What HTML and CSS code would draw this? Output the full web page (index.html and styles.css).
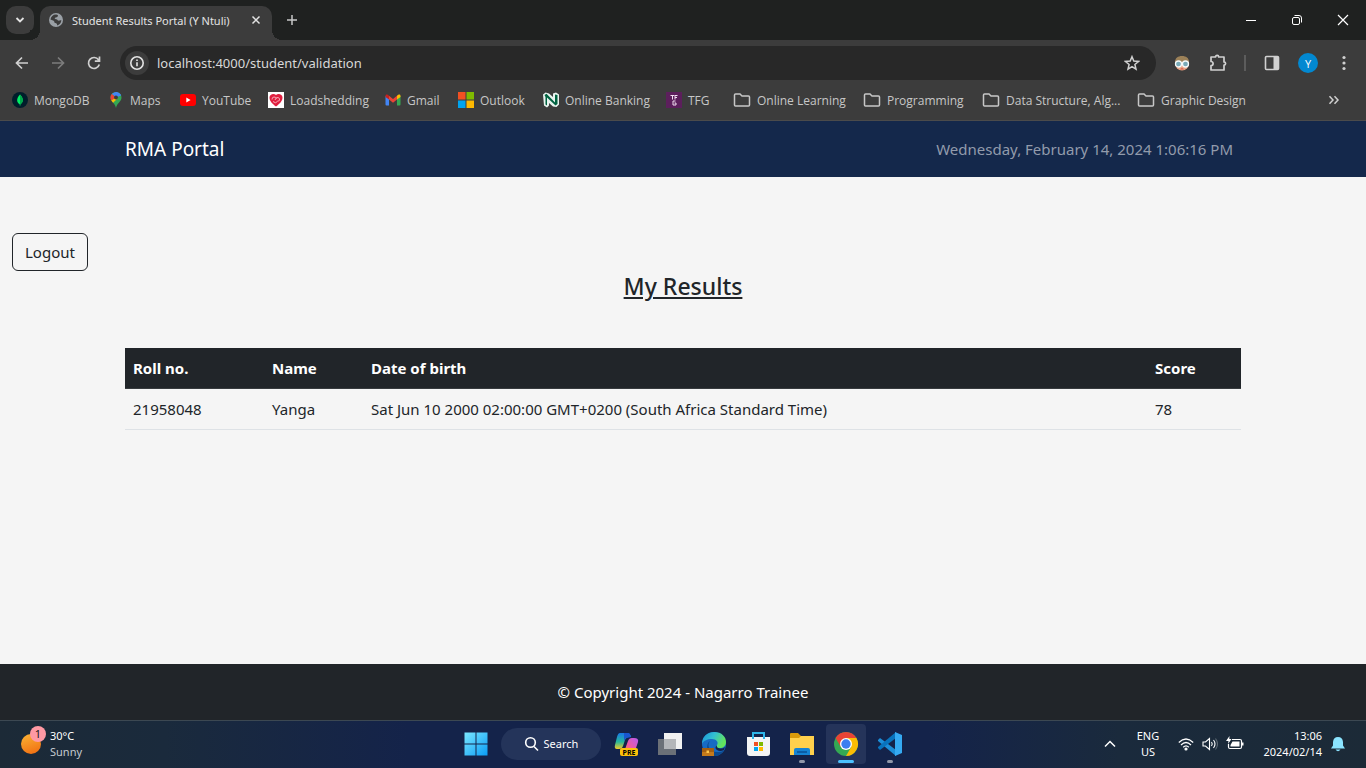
FILE: index.html
```html
<!DOCTYPE html>
<html lang="en">
<head>
<meta charset="utf-8">
<meta name="viewport" content="width=device-width, initial-scale=1">
<title>Student Results Portal (Y Ntuli)</title>
<link rel="stylesheet" href="styles.css">
</head>
<body>
<div class="screen">
  <div class="browser">
    <div class="tab-strip">
      <button class="tab-search" aria-label="Search tabs"><svg width="28" height="28" viewBox="0 0 28 28"><path d="M10.500 12l3.500 3.500 3.500-3.500" fill="none" stroke="#e3e3e3" stroke-width="1.800"/></svg></button>
      <div class="tab">
        <svg width="16" height="16" viewBox="0 0 16 16"><circle cx="8" cy="8" r="7" fill="#9aa0a6"/><path d="M8 2.500c2 0 2.500 1 1.500 2.200-1 1-2.500.3-2.800 1.500-.2 1 2.500.8 3 2 .5 1 1.500 0 3.700 0-.3 3-2 4.600-4.400 5.200.4-1.600-.6-2-1.600-2.300C6 10.700 7 9.200 5 8.400L2.500 7.500C2.900 4.500 5 2.500 8 2.500z" fill="#3c3c3c"/></svg>
        <span class="tab-title">Student Results Portal (Y Ntuli)</span>
        <button class="tab-close" aria-label="Close tab"><svg width="16" height="16" viewBox="0 0 16 16"><path d="M4.500 4.500l7 7M11.500 4.500l-7 7" stroke="#e3e3e3" stroke-width="1.500"/></svg></button>
      </div>
      <button class="new-tab" aria-label="New tab"><svg width="16" height="16" viewBox="0 0 16 16"><path d="M8 3v10M3 8h10" stroke="#c7c7c7" stroke-width="1.500"/></svg></button>
      <div class="window-controls">
        <button aria-label="Minimize"><svg width="16" height="16" viewBox="0 0 16 16"><path d="M3 8.500h10" stroke="#fff"/></svg></button>
        <button aria-label="Restore"><svg width="16" height="16" viewBox="0 0 16 16" fill="none" stroke="#fff"><rect x="3.500" y="5.500" width="7" height="7" rx="1.500"/><path d="M5.500 3.500h4.500a2.500 2.500 0 0 1 2.500 2.500v4.500"/></svg></button>
        <button aria-label="Close"><svg width="16" height="16" viewBox="0 0 16 16"><path d="M3 3l10 10M13 3L3 13" stroke="#fff" stroke-width="1.200"/></svg></button>
      </div>
    </div>

    <div class="toolbar">
      <button aria-label="Back"><svg width="16" height="16" viewBox="0 0 16 16" fill="none" stroke="#d0d0d0" stroke-width="1.700"><path d="M14 8H3M8 2.500L2.500 8 8 13.500"/></svg></button>
      <button aria-label="Forward"><svg width="16" height="16" viewBox="0 0 16 16" fill="none" stroke="#7c7c7c" stroke-width="1.700"><path d="M2 8h11M8 2.500L13.500 8 8 13.500"/></svg></button>
      <button aria-label="Reload"><svg width="16" height="16" viewBox="0 0 16 16" fill="none" stroke="#d0d0d0" stroke-width="1.700"><path d="M13.300 9.500A5.500 5.500 0 1 1 12.500 4.800L13 5.500M13.500 1.500v4.700H8.800"/></svg></button>
      <div class="address-bar">
        <button class="site-info" aria-label="Site information"><svg width="16" height="16" viewBox="0 0 16 16" fill="none" stroke="#e3e3e3" stroke-width="1.600"><circle cx="8" cy="8" r="6.200"/><path d="M8 7.200v4M8 4.500v1.600"/></svg></button>
        <input type="text" aria-label="Address" value="localhost:4000/student/validation">
        <button class="star" aria-label="Bookmark this tab"><svg width="16" height="16" viewBox="0 0 16 16" fill="none" stroke="#d0d0d0" stroke-width="1.500"><path d="M8 1.700l1.800 4.400 4.700.4-3.600 3 1.100 4.700-4-2.500-4 2.500 1.100-4.700-3.600-3 4.700-.4z"/></svg></button>
      </div>
      <div class="extensions">
        <button aria-label="Extension"><svg width="16" height="16" viewBox="0 0 16 16"><circle cx="8" cy="8.500" r="7" fill="#e8a484"/><path d="M1 7C1 3 4 1 8 1s7 2 7 6z" fill="#9c8158"/><circle cx="4.500" cy="9" r="3" fill="#78aab8" stroke="#f4fafa" stroke-width="1.300"/><circle cx="11.500" cy="9" r="3" fill="#78aab8" stroke="#f4fafa" stroke-width="1.300"/><path d="M6 14.500q2-3 4 0" fill="#d65b4c"/></svg></button>
        <button aria-label="Extensions"><svg width="20" height="20" viewBox="0 0 20 20"><path d="M3 4h4.500a1.600 1.600 0 0 1 3.200 0H16v5a1.600 1.600 0 0 1 0 3.200V17H3v-4.300a2 2 0 0 0 0-4.200z" fill="none" stroke="#d0d0d0" stroke-width="1.700" stroke-linejoin="round"/></svg></button>
        <span class="divider"></span>
        <button aria-label="Side panel"><svg width="16" height="16" viewBox="0 0 16 16"><rect x="1.500" y="1.500" width="13" height="13" rx="1" fill="none" stroke="#d0d0d0" stroke-width="1.600"/><path d="M9.500 2h5v12h-5z" fill="#d0d0d0"/></svg></button>
        <button class="avatar" aria-label="Profile">Y</button>
        <button aria-label="Menu"><svg width="16" height="16" viewBox="0 0 16 16" fill="#d0d0d0"><circle cx="8" cy="2.500" r="1.600"/><circle cx="8" cy="8" r="1.600"/><circle cx="8" cy="13.500" r="1.600"/></svg></button>
      </div>
    </div>

    <nav class="bookmarks" aria-label="Bookmarks">
      <a href="#"><svg width="16" height="16" viewBox="0 0 16 16"><circle cx="8" cy="8" r="8" fill="#001e2b"/><path d="M8 2.500c4 4 3.500 8 .3 9.700v1.300h-.6v-1.300C4.500 10.500 4 6.500 8 2.500z" fill="#00ed64"/><path d="M8 2.500v11h.3v-1.300c3.200-1.700 3.700-5.700-.3-9.700z" fill="#00a84a"/></svg>MongoDB</a>
      <a href="#"><svg width="16" height="16" viewBox="0 0 16 16"><path d="M8 0a5.500 5.500 0 0 1 5.500 5.500C13.500 10 9 10.500 8 16 7 10.500 2.500 10 2.500 5.500A5.500 5.500 0 0 1 8 0z" fill="#34a853"/><path d="M3.800 2L8 5.500 13.100 3.500A5.500 5.500 0 0 0 3.800 2z" fill="#4285f4"/><path d="M3.800 2L8 5.500 3.300 8.600C2 6.500 2.300 3.500 3.800 2z" fill="#ea4335"/><path d="M8 5.500L3.300 8.600l1.800 2.200L10 6z" fill="#fbbc04"/><circle cx="8" cy="5.500" r="2" fill="#3c3c3c"/></svg>Maps</a>
      <a href="#"><svg width="16" height="16" viewBox="0 0 16 16"><rect y="2" width="16" height="12" rx="3" fill="#f00"/><path d="M6.300 5.500v5l4.300-2.500z" fill="#fff"/></svg>YouTube</a>
      <a href="#"><svg width="16" height="16" viewBox="0 0 16 16"><path d="M0 0h16v16H0z" fill="#fff"/><path d="M8 14.500C4 11.500 1.500 9 1.500 5.500 1.500 2 6 .8 8 3c2-2.200 6.500-1 6.500 2.500C14.500 9 12 11.500 8 14.500z" fill="#e01e3f"/><path d="M4 7.500q0-2.500 2-2.500t2.500 1.500M7 8q1-3 3-2.500t1.500 2.500q-.5 1.500-2 1M5 9.500q2.500 2.500 4.500 0" fill="none" stroke="#f8b8c2" stroke-width=".9"/></svg>Loadshedding</a>
      <a href="#"><svg width="16" height="16" viewBox="0 0 16 16"><path d="M.5 4v8.500q0 1 1 1H4V6z" fill="#4285f4"/><path d="M15.500 4v8.500q0 1-1 1H12V6z" fill="#34a853"/><path d="M12 3.800V7.500l3.500-2.600V4c0-1.700-2-2-3.500-.2z" fill="#fbbc04"/><path d="M4 3.800L8 7l4-3.200v3.800L8 10.800 4 7.600z" fill="#ea4335"/><path d="M.5 4v.9L4 7.600V3.800C2.500 2 .5 2.300.5 4z" fill="#c5221f"/></svg>Gmail</a>
      <a href="#"><svg width="16" height="16" viewBox="0 0 16 16"><path d="M0 0h7.500v7.500H0z" fill="#f25022"/><path d="M8.500 0H16v7.500H8.500z" fill="#7fba00"/><path d="M0 8.500h7.500V16H0z" fill="#00a4ef"/><path d="M8.500 8.500H16V16H8.500z" fill="#ffb900"/></svg>Outlook</a>
      <a href="#"><svg width="16" height="16" viewBox="0 0 16 16"><path d="M0 2.500L2.500.500 6 1.500l4 3.500V1.500L13 .500l3 2v10l-2.500 2.500-3.500-.5L6 11v2.500L4 15.500l-3-2z" fill="#e9f3ef"/><path d="M1.500 3l2-1.200 8.500 8.700V2.500l2.500.5v9L12.500 13.500 4 5.500v8L2.500 12.500V5z" fill="#006341"/></svg>Online Banking</a>
      <a href="#"><svg width="16" height="16" viewBox="0 0 16 16"><path d="M0 0h16v16H0z" fill="#5c1f5c"/><path d="M4.500 3.500h4M6.500 3.500v4M9 7.500v-4h2.500M9 5.500h2M9.500 9H7v4h3v-2H8.500" fill="none" stroke="#f1dff1"/></svg>TFG</a>
      <a class="folder" href="#"><svg width="18" height="16" viewBox="0 0 18 16"><path d="M1.500 3q0-1 1-1H7l2 2h6.500q1 0 1 1v8q0 1-1 1h-13q-1 0-1-1z" fill="none" stroke="#c7c7c7" stroke-width="1.500"/></svg>Online Learning</a>
      <a class="folder" href="#"><svg width="18" height="16" viewBox="0 0 18 16"><path d="M1.500 3q0-1 1-1H7l2 2h6.500q1 0 1 1v8q0 1-1 1h-13q-1 0-1-1z" fill="none" stroke="#c7c7c7" stroke-width="1.500"/></svg>Programming</a>
      <a class="folder" href="#"><svg width="18" height="16" viewBox="0 0 18 16"><path d="M1.500 3q0-1 1-1H7l2 2h6.500q1 0 1 1v8q0 1-1 1h-13q-1 0-1-1z" fill="none" stroke="#c7c7c7" stroke-width="1.500"/></svg>Data Structure, Alg...</a>
      <a class="folder" href="#"><svg width="18" height="16" viewBox="0 0 18 16"><path d="M1.500 3q0-1 1-1H7l2 2h6.500q1 0 1 1v8q0 1-1 1h-13q-1 0-1-1z" fill="none" stroke="#c7c7c7" stroke-width="1.500"/></svg>Graphic Design</a>
      <button class="more" aria-label="More bookmarks"><svg width="16" height="16" viewBox="0 0 16 16"><path d="M3.500 4.200L7 8l-3.500 3.800M8.500 4.200L12 8l-3.500 3.800" fill="none" stroke="#d0d0d0" stroke-width="1.500"/></svg></button>
    </nav>
  </div>

  <div class="page">
    <header class="navbar">
      <div class="container navbar-inner">
        <a class="brand" href="#">RMA Portal</a>
        <span class="clock">Wednesday, February 14, 2024 1:06:16 PM</span>
      </div>
    </header>
    <main class="content">
      <button class="logout">Logout</button>
      <div class="container">
        <h1 class="heading">My Results</h1>
        <table class="results">
          <thead>
            <tr><th class="col-roll">Roll no.</th><th class="col-name">Name</th><th>Date of birth</th><th class="col-score">Score</th></tr>
          </thead>
          <tbody>
            <tr><td>21958048</td><td>Yanga</td><td>Sat Jun 10 2000 02:00:00 GMT+0200 (South Africa Standard Time)</td><td>78</td></tr>
          </tbody>
        </table>
      </div>
    </main>
    <footer class="footer">© Copyright 2024 - Nagarro Trainee</footer>
  </div>

  <div class="taskbar">
    <div class="weather">
      <span class="weather-icon"><span class="sun"></span><span class="badge">1</span></span>
      <span class="weather-text"><span>30°C</span><span class="dim">Sunny</span></span>
    </div>
    <div class="apps">
      <button class="app" aria-label="Start"><svg width="24" height="24" viewBox="0 0 24 24"><defs><linearGradient id="win" x2="1" y2="1"><stop stop-color="#7be7ff"/><stop offset="1" stop-color="#0a9cf5"/></linearGradient></defs><path d="M.5.500h11v11H.5zM12.500.500h11v11h-11zM.5 12.500h11v11H.5zM12.500 12.500h11v11h-11z" fill="url(#win)"/></svg></button>
      <button class="search"><svg width="16" height="16" viewBox="0 0 16 16"><path d="M10 10.500L14 14.500" stroke="#fff" stroke-width="1.600"/><circle cx="6.500" cy="6.500" r="4.800" fill="none" stroke="#fff" stroke-width="1.600"/></svg>Search</button>
      <button class="app" aria-label="Copilot"><svg width="26" height="26" viewBox="0 0 26 26"><defs><linearGradient id="cpa" x2="0" y2="1"><stop stop-color="#1878e8"/><stop offset=".55" stop-color="#27b79a"/><stop offset="1" stop-color="#f4ca28"/></linearGradient><linearGradient id="cpb" x1="1" x2="0" y2="1"><stop stop-color="#b65af0"/><stop offset=".6" stop-color="#ef5ba0"/><stop offset="1" stop-color="#f98a3c"/></linearGradient></defs><path d="M7 2h8q2 0 3 4h-3q-2 0-3 3l-2 6q-1 3-4 3H4q-3 0-2-4L4 6q1-4 3-4z" fill="url(#cpa)"/><path d="M15 2q2 0 3 4l-4 1q-2 0-3 3V2z" fill="#1956cf"/><path d="M19 7h2q5 0 4 4l-2 6q-1 4-5 4h-7l4-11q1-3 4-3z" fill="url(#cpb)"/><rect x="7" y="17" width="18" height="8" rx="2" fill="#ffc20a"/><text x="16" y="24" text-anchor="middle" font-size="7" class="pre">PRE</text></svg></button>
      <button class="app" aria-label="Task view"><svg width="24" height="24" viewBox="0 0 24 24"><path d="M6 1h18v16H6z" fill="#f1f1f1"/><path d="M0 7h18v16H0z" fill="#6b7077"/><path d="M6 7h12v10H6z" fill="#b4b6b9"/></svg></button>
      <button class="app" aria-label="Edge"><svg width="26" height="26" viewBox="0 0 26 26"><defs><linearGradient id="ed" x2="1" y2=".4"><stop stop-color="#1893da"/><stop offset=".5" stop-color="#32bfd2"/><stop offset="1" stop-color="#63e45c"/></linearGradient></defs><circle cx="13" cy="13" r="12" fill="#176bc4"/><path d="M1 13C1 5 7 1 13 1c8 0 12 5 12 10 0 4-3 6-6 6-3.500 0-4.500-1.500-3-3 2-3-1-6-5-6-5 0-9 2-10 5z" fill="url(#ed)"/><path d="M9 10c-4 5 0 12 9 11 2 0 4-1 5-2-2 4-6 6-10 6-7 0-9-12-4-15z" fill="#0c4a8f"/><path d="M16 14q-1 3 3 3.500 3 .3 5-1.500l-1 3q-4 2-7 0-3-2 0-5z" fill="#14234a"/><path d="M1 17h12v8H1z" fill="#c47a1b"/><path d="M1 17h12v4H1z" fill="#a35f12"/><path d="M5.500 19.500h2.500v2.500H5.500z" fill="#ffc84a"/></svg></button>
      <button class="app" aria-label="Microsoft Store"><svg width="26" height="26" viewBox="0 0 26 26"><path d="M2 6h23v16q0 3-3 3H5q-3 0-3-3z" fill="#f3f4f5"/><path d="M8 8V2h11v6" fill="none" stroke="#2fb5e8" stroke-width="2"/><path d="M9 11h4v4H9z" fill="#f25022"/><path d="M14 11h4v4h-4z" fill="#7fba00"/><path d="M9 16h4v4H9z" fill="#00a4ef"/><path d="M14 16h4v4h-4z" fill="#ffb900"/></svg></button>
      <button class="app running" aria-label="File Explorer"><svg width="26" height="26" viewBox="0 0 26 26"><path d="M1 3q0-1 1-1h7l3 3h12v4H1z" fill="#d99a0b"/><path d="M1 7h9l2-2h13v19H1z" fill="#ffd04c"/><path d="M5 24v-5q0-2 2-2h12q2 0 2 2v5z" fill="#1583d3"/><path d="M8 20h10v2H8z" fill="#0a5da6"/></svg></button>
      <button class="app running active" aria-label="Chrome"><svg width="26" height="26" viewBox="0 0 26 26"><circle cx="13" cy="13" r="12" fill="#34a853"/><path d="M13 13L2.600 7A12 12 0 0 1 23.400 7z" fill="#ea4335"/><path d="M13 7h10.400A12 12 0 0 1 13 25l5.200-9z" fill="#fbbc04"/><path d="M2.600 7L7.800 16 13 7z" fill="#ea4335"/><circle cx="13" cy="13" r="6" fill="#fff"/><circle cx="13" cy="13" r="4.700" fill="#3b7ef0"/></svg></button>
      <button class="app running" aria-label="Visual Studio Code"><svg width="26" height="26" viewBox="0 0 26 26"><path d="M1 9l2-2 16 12v6L1 10z" fill="#1d8ed8"/><path d="M1 17l2 2L19 7V1L1 16z" fill="#0873bd"/><path d="M18 1l7 3v18l-7 3z" fill="#35aaf2"/></svg></button>
    </div>
    <div class="tray">
      <button aria-label="Show hidden icons"><svg width="16" height="16" viewBox="0 0 16 16"><path d="M3 10.500L8 5.500l5 5" fill="none" stroke="#fff" stroke-width="1.500"/></svg></button>
      <span class="lang"><span>ENG</span><span>US</span></span>
      <span class="status">
        <svg width="16" height="16" viewBox="0 0 16 16" fill="none" stroke="#fff" stroke-width="1.200"><path d="M.8 6.500q7.200-7 14.400 0M3 9q5-5 10 0M5.200 11.200q2.800-2.700 5.600 0"/><circle cx="8" cy="13" r="1" fill="#fff"/></svg>
        <svg width="16" height="16" viewBox="0 0 16 16" fill="none" stroke="#fff" stroke-width="1.100"><path d="M1 6h2.500L7.500 2.500v11L3.500 10H1zM9.500 6q1.500 2 0 4M11.500 4q3 4 0 8"/><path d="M13.500 2.500q4 5.500 0 11" stroke="#5c6872"/></svg>
        <svg width="18" height="16" viewBox="0 0 18 16"><path d="M6 3.500h8q1.500 0 1.500 1.500v6q0 1.500-1.500 1.500H4q-1.500 0-1.500-1.500V8" fill="none" stroke="#fff" stroke-width="1.200"/><path d="M6.500 5.500h7v5h-9V9zM16 6.500h1.500v3H16z" fill="#fff"/><path d="M3.500 0L0 5h2.500L2 8l3.500-5H3.300z" fill="#fff"/></svg>
      </span>
      <span class="datetime"><span>13:06</span><span>2024/02/14</span></span>
      <button aria-label="Notifications"><svg width="16" height="16" viewBox="0 0 16 16" fill="#8be4ff"><path d="M8 1q4.500 0 5 5v3.500l2 3H1l2-3V6q.5-5 5-5zM5.500 13.500h5Q8 17 5.500 13.500z"/></svg></button>
    </div>
  </div>
</div>
</body>
</html>
```
FILE: styles.css
```css
* { box-sizing: border-box; }

body {
  margin: 0;
  font-family: "Noto Sans", "Open Sans", sans-serif;
}

button {
  display: inline-flex;
  align-items: center;
  justify-content: center;
  padding: 0;
  border: 0;
  background: none;
  color: inherit;
  font: inherit;
}

a { color: inherit; text-decoration: none; }

svg { display: block; flex: none; }

.screen { display: flex; flex-direction: column; min-height: 100vh; }

/* Browser window */
.browser {
  background: #3c3c3c;
  border-bottom: 1px solid #4b4b4b;
  color: #c7c7c7;
  font-family: "Open Sans", "Noto Sans", sans-serif;
  font-size: 12px;
}

.tab-strip {
  display: flex;
  align-items: center;
  height: 40px;
  padding-left: 6px;
  background: #1f2120;
}

.tab-search {
  width: 28px;
  height: 28px;
  border-radius: 10px;
  background: #3c3c3c;
}

.tab {
  position: relative;
  display: flex;
  align-items: center;
  align-self: flex-end;
  gap: 8px;
  width: 232px;
  height: 34px;
  margin-left: 6px;
  padding: 0 8px 6px;
  border-radius: 10px 10px 0 0;
  background: #3c3c3c;
  color: #e3e3e3;
}

.tab::before,
.tab::after {
  content: "";
  position: absolute;
  bottom: 0;
  width: 10px;
  height: 10px;
}

.tab::before { right: 100%; background: radial-gradient(circle at 0 0, #1f2120 10px, #3c3c3c 10px); }
.tab::after { left: 100%; background: radial-gradient(circle at 100% 0, #1f2120 10px, #3c3c3c 10px); }

.tab-title { flex: 1; font-family: "Noto Sans", sans-serif; font-size: 11px; white-space: nowrap; }

.new-tab { margin-left: 12px; }

.window-controls { display: flex; margin-left: auto; }
.window-controls button { width: 46px; height: 40px; }

.toolbar { display: flex; align-items: center; height: 46px; padding: 0 14px; }
.toolbar > button { width: 16px; margin-right: 20px; }

.address-bar {
  display: flex;
  flex: 1;
  align-items: center;
  height: 34px;
  margin-left: -2px;
  padding: 0 16px 0 5px;
  border-radius: 17px;
  background: #282828;
}

.site-info { width: 24px; height: 24px; border-radius: 12px; background: #3c3c3c; }

.address-bar input {
  flex: 1;
  min-width: 0;
  padding: 0 8px;
  border: 0;
  background: none;
  color: #d8d8d8;
  font: inherit;
  font-family: "Noto Sans", sans-serif;
  font-size: 13px;
}

.extensions { display: flex; align-items: center; gap: 18px; padding-left: 18px; }
.divider { width: 2px; height: 16px; margin-left: -2px; background: #5c5c5c; }
.avatar { width: 20px; height: 20px; border-radius: 10px; background: #0288d1; color: #fff; font-size: 11px; }

.bookmarks {
  display: grid;
  grid-template-columns: 96px 72px 88px 117px 73px 85px 123px 67px 130px 119px 155px 1fr 16px;
  align-items: center;
  height: 34px;
  padding: 0 24px 6px 12px;
}

.bookmarks a { display: flex; align-items: center; gap: 6px; white-space: nowrap; }

/* Portal page */
.page {
  display: flex;
  flex: 1;
  flex-direction: column;
  background: #f5f5f5;
  color: #212529;
  font-size: 15px;
  line-height: 24px;
}

.container { width: 100%; max-width: 1140px; margin: 0 auto; padding: 0 12px; }

.navbar { padding: 13px 0; background: #14284b; }
.navbar-inner { display: flex; align-items: center; justify-content: space-between; padding-right: 20px; }
.brand { color: #fff; font-size: 19px; line-height: 30px; }
.clock { color: #929bab; }

.content { flex: 1; padding-top: 56px; }

.logout {
  margin-left: 12px;
  padding: 6px 12px;
  border: 1px solid #212529;
  border-radius: 6px;
}

.heading {
  margin: 0 0 47px;
  font-size: 23px;
  font-weight: 500;
  line-height: 30px;
  text-align: center;
  text-decoration: underline;
}

.results { width: 100%; border-collapse: collapse; text-align: left; }
.results th, .results td { padding: 8px; border-bottom: 1px solid #dee2e6; }
.results th { background: #212529; border-color: #373b3e; color: #fff; }
.col-roll { width: 139px; }
.col-name { width: 99px; }
.col-score { width: 94px; }

.footer { padding: 16px; background: #212529; color: #fff; text-align: center; }

/* Desktop taskbar */
.taskbar {
  display: grid;
  grid-template-columns: 1fr auto 1fr;
  align-items: center;
  height: 48px;
  padding-bottom: 2px;
  border-top: 1px solid #3c4852;
  background: linear-gradient(90deg, #1c2a37 0%, #1a2a3c 12%, #14234a 30%, #14234a 68%, #1a2a3c 82%, #1c2a37 100%);
  color: #fff;
  font-size: 11px;
  line-height: 16px;
}

.weather { display: flex; gap: 4px; padding-left: 20px; }
.weather-icon { position: relative; width: 26px; }
.sun {
  display: block;
  width: 20px;
  height: 20px;
  margin: 6px 1px;
  border-radius: 50%;
  background: linear-gradient(160deg, #fbb535, #f0690f);
}
.badge {
  position: absolute;
  top: -2px;
  right: 0;
  width: 16px;
  height: 16px;
  border-radius: 50%;
  background: #ff99a4;
  color: #1b1b1b;
  text-align: center;
}
.weather-text { display: flex; flex-direction: column; }
.dim { color: #c5cad0; }

.apps { display: flex; align-items: center; gap: 4px; }
.app { position: relative; width: 40px; height: 40px; border-radius: 4px; }
.search {
  gap: 4px;
  width: 100px;
  height: 32px;
  margin: 0 1px;
  border-radius: 16px;
  background: #24345a;
}
.pre { font-weight: 700; }
.active { background: #25345a; }
.running::after {
  content: "";
  position: absolute;
  bottom: 1px;
  left: 50%;
  width: 6px;
  height: 3px;
  border-radius: 2px;
  background: #9198a9;
  transform: translateX(-50%);
}
.active::after { width: 16px; background: #4cc2ff; }

.tray { display: flex; align-items: center; justify-content: flex-end; padding-right: 20px; }
.lang { display: flex; flex-direction: column; width: 60px; text-align: center; }
.status { display: flex; gap: 8px; }
.datetime { display: flex; flex-direction: column; width: 78px; margin-right: 8px; text-align: right; }
```
